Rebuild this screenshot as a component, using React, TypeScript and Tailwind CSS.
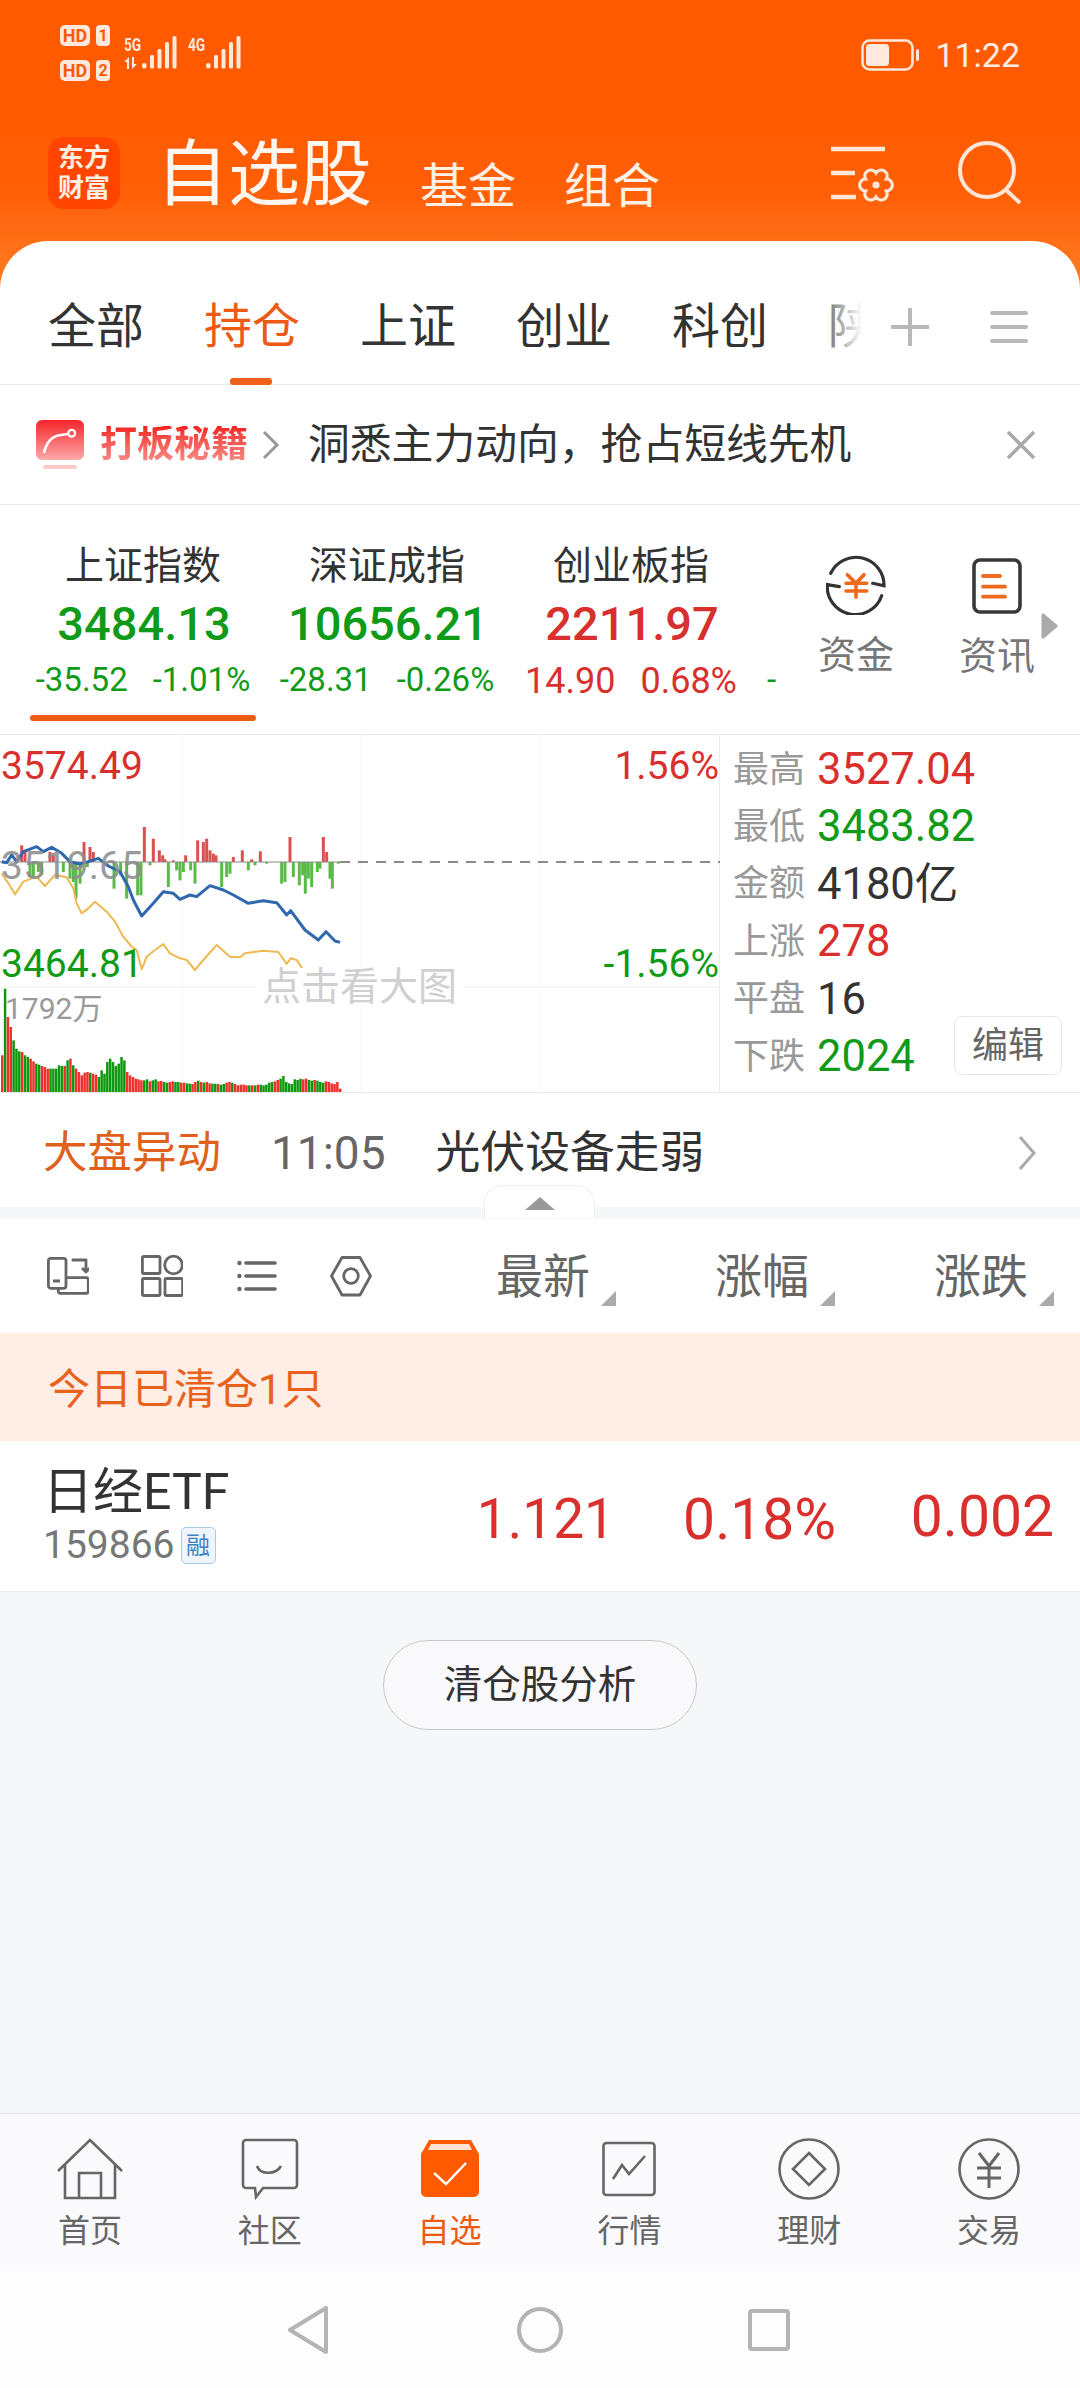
const RED = "text-[#d9302e]";
const GREEN = "text-[#0f9a17]";

// chart data traced from the picture, in 3x coordinates
const blueLine: number[][] = [[5,365],[20,368],[35,345],[50,365],[70,335],[110,320],[130,335],[155,322],[185,340],[210,365],[240,372],[265,365],[295,355],[325,378],[360,395],[385,440],[400,480],[425,528],[460,490],[490,455],[520,460],[540,478],[570,465],[590,470],[630,437],[670,450],[700,465],[745,490],[790,482],[830,488],[860,525],[872,512],[915,570],[955,600],[978,575],[1005,603],[1020,607]];
const yellowLine: number[][] = [[5,400],[25,430],[45,463],[70,425],[110,410],[135,438],[165,405],[200,412],[220,445],[230,490],[245,520],[265,505],[285,485],[320,515],[345,545],[370,590],[395,620],[410,630],[425,688],[440,650],[465,630],[490,612],[510,640],[540,655],[560,660],[585,690],[610,660],[650,615],[690,650],[720,652],[735,640],[790,632],[835,636],[860,672],[872,655],[890,660],[930,722],[960,735],[980,708],[1005,735],[1020,740]];
const macdUp: number[][] = [[65,50],[75,30],[150,30],[160,20],[252,60],[270,45],[280,30],[433,105],[460,70],[478,35],[488,20],[495,8],[520,5],[557,20],[593,65],[610,60],[620,70],[630,35],[640,25],[648,20],[700,15],[727,35],[755,8],[781,32],[870,75],[970,75],[980,30]];
const macdDown: number[][] = [[90,45],[100,50],[115,30],[125,40],[190,30],[210,50],[220,60],[228,110],[240,65],[262,15],[342,80],[362,40],[380,110],[413,100],[423,100],[450,10],[505,75],[530,25],[540,55],[550,30],[572,25],[585,65],[665,75],[680,45],[690,35],[745,25],[765,10],[800,5],[845,65],[855,60],[880,45],[898,70],[908,40],[916,95],[925,50],[935,75],[952,30],[960,20],[990,50],[997,80],[1015,5]];
const volH = [110,310,225,195,155,130,122,120,110,105,100,92,85,82,78,75,70,70,70,70,80,78,78,95,100,80,70,60,50,58,60,58,55,52,45,65,55,90,100,90,78,85,105,95,60,50,45,40,38,35,35,38,32,35,38,32,33,30,28,30,32,30,30,28,28,26,25,24,30,34,30,28,30,26,25,25,24,22,24,28,30,28,24,20,22,22,20,20,20,20,22,22,20,22,28,30,32,36,40,48,30,26,24,38,36,40,38,40,36,34,36,34,30,28,32,30,26,24,30,10];
const volC = "rgrrgggrggrrggrrrgggggrgrgrrrrrgrrggggggggggrrrrrrggrggrrggrrggrrggrrgrgrrggrggrrgrrrrrgrgrgggggrrggggggggrrggrgggr";

const toPts = (pts: number[][]) => pts.map(([x, y]) => `${x / 3},${y / 3 + 5}`).join(" ");

const Chart = () => (
  <svg width="720" height="357" viewBox="0 0 720 357" className="block">
    <g stroke="#ededed" strokeWidth="1">
      <line x1="0" x2="720" y1="252" y2="252" />
      <line x1="182" x2="182" y1="0" y2="357" strokeDasharray="2 2" />
      <line x1="361" x2="361" y1="0" y2="357" strokeDasharray="2 2" />
      <line x1="541" x2="541" y1="0" y2="357" strokeDasharray="2 2" />
    </g>
    <line x1="340" x2="720" y1="127" y2="127" stroke="#8a8a8a" strokeWidth="2" strokeDasharray="10 8" />
    {macdUp.map(([x, h]) => (
      <rect key={`u${x}`} x={x / 3 - 1.5} y={127 - h / 3} width="3" height={h / 3} fill="#dd5050" />
    ))}
    {macdDown.map(([x, h]) => (
      <rect key={`d${x}`} x={x / 3 - 1.5} y={127} width="3" height={h / 3} fill="#5cba48" />
    ))}
    <line x1="0" x2="350" y1="127" y2="127" stroke="#8a8a8a" strokeWidth="1" />
    <polyline points={toPts(yellowLine)} fill="none" stroke="#efb951" strokeWidth="2" strokeLinejoin="round" />
    <polyline points={toPts(blueLine)} fill="none" stroke="#2f68ae" strokeWidth="3" strokeLinejoin="round" />
    {volH.map((h, i) => (
      <rect
        key={i}
        x={1 + i * 2.84}
        y={357 - h / 3}
        width="2.5"
        height={h / 3}
        fill={volC[i] === "g" ? "#0d980f" : "#f0302c"}
      />
    ))}
  </svg>
);

const Signal = () => (
  <svg width="36" height="33" viewBox="0 0 36 33" fill="#ffe9dc" className="mt-[11px]">
    <rect x="0" y="27" width="4.5" height="5.5" rx="2" />
    <rect x="8" y="19" width="4" height="13.5" rx="1.5" />
    <rect x="15.5" y="13" width="4" height="19.5" rx="1.5" />
    <rect x="23" y="6" width="4" height="26.5" rx="1.5" />
    <rect x="30.5" y="0" width="4" height="32.5" rx="1.5" />
  </svg>
);

const NetLabel = ({ text }: { text: string }) => (
  <span className="block w-[18px] origin-left scale-x-[0.72] whitespace-nowrap text-[19px] font-bold leading-none">{text}</span>
);

const StatusBar = () => (
  <div className="flex h-[100px] items-start justify-between px-[60px] pt-[25px] text-[#ffe9dc]">
    <div className="flex">
      <div className="flex flex-col gap-[14px]">
        {["1", "2"].map((n) => (
          <div key={n} className="flex gap-[6px]">
            <span className="flex h-[21px] w-[30px] items-center justify-center rounded-[5px] bg-[#ffe9dc] text-[18px] font-bold leading-none text-[#ff5a00]">
              HD
            </span>
            <span className="flex h-[21px] w-[14px] items-center justify-center rounded-[4px] bg-[#ffe9dc] text-[16px] font-bold leading-none text-[#ff5a00]">
              {n}
            </span>
          </div>
        ))}
      </div>
      <div className="ml-[14px] mt-[10px] w-[18px]">
        <NetLabel text="5G" />
        <svg width="17" height="12" viewBox="0 0 17 12" fill="#ffe9dc" className="mt-[3px]">
          <path d="M0 5L5 0V12H3V5ZM8 0H10V7H13L8 12Z" />
        </svg>
      </div>
      <Signal />
      <div className="ml-[10px] mt-[10px]">
        <NetLabel text="4G" />
      </div>
      <Signal />
    </div>
    <div className="flex items-center gap-[14px] pt-[13px]">
      <svg width="60" height="32" viewBox="0 0 60 32" fill="none">
        <rect x="1.5" y="1.5" width="50" height="29" rx="7" stroke="#ffe9dc" strokeWidth="2.5" />
        <rect x="5" y="5" width="23" height="22" rx="3.5" fill="#ffe9dc" />
        <rect x="55" y="10" width="3" height="12" rx="1.5" fill="#ffe9dc" />
      </svg>
      <span className="text-[34px] leading-none text-[#ffeee4]">11:22</span>
    </div>
  </div>
);

const Header = () => (
  <div className="flex h-[190px] items-start bg-gradient-to-b from-[#ff5a00] via-[#ff5f06] to-[#ff7d22]">
    <div className="ml-[48px] mt-[37px] flex h-[72px] w-[72px] flex-col items-center justify-center rounded-[16px] bg-[#ff4500] text-[26px] font-bold leading-[30px] text-[#ffeee2]">
      <span>东方</span>
      <span>财富</span>
    </div>
    <span className="ml-[36px] mt-[39px] text-[72px] leading-none text-[#fff6ef]">自选股</span>
    <span className="ml-[48px] mt-[63px] text-[48px] leading-none text-[#fff1e6]">基金</span>
    <span className="ml-[48px] mt-[63px] text-[48px] leading-none text-[#fff1e6]">组合</span>
    <svg width="70" height="66" viewBox="0 0 70 66" fill="none" stroke="#ffe6d6" strokeWidth="4.5" className="ml-[169px] mt-[43px]">
      <path d="M2 6H56M2 30H26M2 54H27" />
      <g transform="translate(47 42)" strokeWidth="3.2">
        <path d="M0 -12A6 6 0 0 1 10.4 -6A6 6 0 0 1 10.4 6A6 6 0 0 1 0 12A6 6 0 0 1 -10.4 6A6 6 0 0 1 -10.4 -6A6 6 0 0 1 0 -12Z" />
        <circle r="3.6" fill="#ffe6d6" stroke="none" />
      </g>
    </svg>
    <svg width="66" height="66" viewBox="0 0 66 66" fill="none" stroke="#ffe6d6" strokeWidth="4" className="ml-[58px] mt-[40px]">
      <circle cx="30" cy="30" r="27" />
      <path d="M48 49L63 63" />
    </svg>
  </div>
);

const Tabs = () => (
  <div className="relative flex h-[144px] items-center border-b border-[#e8e8e8] pl-[48px] pt-[28px] text-[48px] leading-none text-[#333]">
    <div className="flex gap-[60px]">
      <span>全部</span>
      <span className="relative text-[#ec5a14]">
        持仓
        <span className="absolute -bottom-[34px] left-[26px] h-[7px] w-[42px] rounded-[3px] bg-[#f0601a]" />
      </span>
      <span>上证</span>
      <span>创业</span>
      <span>科创</span>
    </div>
    <span className="relative ml-[60px] h-[48px] w-[34px] overflow-hidden text-[#777]">
      陕
      <span className="absolute inset-0 bg-gradient-to-r from-white/0 to-white" />
    </span>
    <svg width="40" height="40" viewBox="0 0 40 40" stroke="#b8b8b8" strokeWidth="4" className="ml-[28px]">
      <path d="M20 1V39M1 20H39" />
    </svg>
    <svg width="38" height="34" viewBox="0 0 38 34" stroke="#b8b8b8" strokeWidth="4" strokeLinecap="round" className="ml-[60px]">
      <path d="M2 3H36M2 17H36M2 31H36" />
    </svg>
  </div>
);

const Banner = () => (
  <div className="flex h-[120px] items-center border-b border-[#e8e8e8] pl-[36px]">
    <svg width="50" height="50" viewBox="0 0 50 50" className="shrink-0">
      <defs>
        <linearGradient id="bn" x1="0" x2="0" y1="0" y2="1">
          <stop offset="0" stopColor="#f5242a" />
          <stop offset="1" stopColor="#fda9a9" />
        </linearGradient>
      </defs>
      <rect x="0" y="0" width="48" height="40" rx="6" fill="url(#bn)" />
      <rect x="7" y="45" width="34" height="4" rx="2" fill="#fbc9c7" />
      <path d="M8 33C10 24 14 16 25 15L32 14" fill="none" stroke="#fff" strokeWidth="2.6" />
      <circle cx="35.7" cy="13.3" r="3.4" fill="none" stroke="#fff" strokeWidth="2.2" />
    </svg>
    <span className="ml-[14px] bg-gradient-to-b from-[#f21c20] to-[#f98a88] bg-clip-text text-[37px] font-bold leading-none text-transparent">
      打板秘籍
    </span>
    <svg width="18" height="30" viewBox="0 0 18 30" fill="none" stroke="#999" strokeWidth="3" className="ml-[14px]">
      <path d="M2 2L15 15L2 28" />
    </svg>
    <span className="ml-[28px] text-[41.8px] leading-none text-[#333]">洞悉主力动向，抢占短线先机</span>
    <svg width="30" height="30" viewBox="0 0 30 30" stroke="#aaa" strokeWidth="3.5" className="ml-[155px]">
      <path d="M2 2L28 28M28 2L2 28" />
    </svg>
  </div>
);

const Index = ({ name, value, a, b, up, active }: { name: string; value: string; a: string; b: string; up?: boolean; active?: boolean }) => (
  <div className="relative flex w-[244px] flex-col items-center pt-[42px]">
    <span className="-ml-[2px] text-[39px] leading-none text-[#333]">{name}</span>
    <span className={`mt-[14px] text-[47px] font-medium leading-none ${up ? RED : GREEN}`}>{value}</span>
    <div className={`-ml-[2px] mt-[16px] flex gap-[25px] leading-none ${up ? `text-[36px] ${RED}` : `text-[33px] ${GREEN}`}`}>
      <span>{a}</span>
      <span>{b}</span>
    </div>
    {active && <span className="absolute bottom-[13px] left-[8px] h-[6px] w-[226px] rounded-[3px] bg-[#ec5a14]" />}
  </div>
);

const Indices = () => (
  <div className="relative flex h-[230px] border-b border-[#e8e8e8] pl-[22px]">
    <Index name="上证指数" value="3484.13" a="-35.52" b="-1.01%" active />
    <Index name="深证成指" value="10656.21" a="-28.31" b="-0.26%" />
    <Index name="创业板指" value="2211.97" a="14.90" b="0.68%" up />
    <span className={`ml-[13px] mt-[158px] w-[23px] text-[33px] leading-none ${GREEN}`}>-</span>
    <div className="flex w-[132px] flex-col items-center pt-[50px]">
      <svg width="60" height="60" viewBox="0 0 60 60" fill="none" strokeLinecap="round">
        <path d="M4.7 18.3A28 28 0 0 1 58 30.7L46.7 28.3M13.3 31.7L1.3 29.7A28 28 0 0 0 55.7 40.7" stroke="#333" strokeWidth="3.2" />
        <path d="M21.3 19.7L30 28.3L38 19.7M20 28.3H40.7M20 36H40.7M30 28.3V42.3" stroke="#ee6a1c" strokeWidth="3.6" />
      </svg>
      <span className="mt-[21px] text-[38px] leading-none text-[#777]">资金</span>
    </div>
    <div className="ml-[9px] flex w-[132px] flex-col items-center pt-[53px]">
      <svg width="50" height="56" viewBox="0 0 50 56" fill="none">
        <rect x="2" y="2" width="46" height="52" rx="6" stroke="#383838" strokeWidth="3.6" />
        <path d="M11 18H28M11 28.7H33M11 38.7H33" stroke="#ee6a1c" strokeWidth="3.8" strokeLinecap="round" />
      </svg>
      <span className="mt-[23px] text-[38px] leading-none text-[#777]">资讯</span>
    </div>
    <svg width="18" height="26" viewBox="0 0 18 26" fill="#aaa" stroke="#aaa" strokeWidth="3" strokeLinejoin="round" className="absolute left-[1041px] top-[108px]">
      <path d="M2 2L15 13L2 24Z" />
    </svg>
  </div>
);

const Stat = ({ label, value, color, children }: { label: string; value: string; color: string; children?: React.ReactNode }) => (
  <div className="flex h-[57.4px] items-center pl-[13px]">
    <span className="w-[73px] text-[36px] leading-none text-[#999]">{label}</span>
    <span className={`ml-[11px] text-[43.5px] leading-none ${color}`}>{value}</span>
    {children}
  </div>
);

const ChartSection = () => (
  <div className="flex h-[358px] border-b border-[#e8e8e8]">
    <div className="relative h-[357px] w-[720px] border-r border-[#ededed]">
      <Chart />
      <span className={`absolute left-[1px] top-[12px] text-[39px] leading-none ${RED}`}>3574.49</span>
      <span className={`absolute right-0 top-[12px] text-[39px] leading-none ${RED}`}>1.56%</span>
      <span className="absolute left-[1px] top-[112px] text-[39px] leading-none text-[#8d8d8d]/90">3519.65</span>
      <span className={`absolute left-[1px] top-[210px] text-[39px] leading-none ${GREEN}`}>3464.81</span>
      <span className={`absolute right-0 top-[210px] text-[39px] leading-none ${GREEN}`}>-1.56%</span>
      <span className="absolute left-[5px] top-[259px] text-[30px] leading-none text-[#999]">1792万</span>
      <span className="absolute left-[256px] top-[233px] bg-white px-[6px] text-[39px] leading-none text-[#d0d0d0]">点击看大图</span>
    </div>
    <div className="flex-1 pt-[6px]">
      <Stat label="最高" value="3527.04" color={RED} />
      <Stat label="最低" value="3483.82" color={GREEN} />
      <Stat label="金额" value="4180亿" color="text-[#333]" />
      <Stat label="上涨" value="278" color={RED} />
      <Stat label="平盘" value="16" color="text-[#333]" />
      <Stat label="下跌" value="2024" color={GREEN}>
        <span className="-mt-[22px] ml-auto mr-[18px] flex h-[59px] w-[108px] items-center justify-center rounded-[8px] border border-[#e6e6e6] text-[36px] leading-none text-[#666]">
          编辑
        </span>
      </Stat>
    </div>
  </div>
);

const Alert = () => (
  <div className="relative flex h-[114px] items-center pl-[43px] pt-[6px] leading-none">
    <span className="text-[44.5px] text-[#e0611c]">大盘异动</span>
    <span className="ml-[50px] text-[46px] text-[#666]">11:05</span>
    <span className="ml-[50px] text-[44.8px] text-[#333]">光伏设备走弱</span>
    <svg width="20" height="36" viewBox="0 0 20 36" fill="none" stroke="#aaa" strokeWidth="3" className="ml-auto mr-[43px]">
      <path d="M3 2L17 18L3 34" />
    </svg>
  </div>
);

const Strip = () => (
  <div className="relative h-[12px] bg-[#f6f7f9]">
    <div className="absolute -top-[22px] left-[484px] flex h-[33px] w-[111px] items-start justify-center rounded-t-[18px] border-x border-t border-[#f0f0f0] bg-white pt-[11px]">
      <svg width="30" height="13" viewBox="0 0 30 13" fill="#999">
        <path d="M15 0L30 13H0Z" />
      </svg>
    </div>
  </div>
);

const SortHead = ({ label, w }: { label: string; w: string }) => (
  <div className={`relative flex justify-end ${w}`}>
    <span className="whitespace-nowrap text-[47px] leading-none text-[#666]">{label}</span>
    <svg width="15" height="15" viewBox="0 0 15 15" fill="#aaa" className="mb-[-6px] ml-[11px] shrink-0 self-end">
      <path d="M15 0V15H0Z" />
    </svg>
  </div>
);

const TableHead = () => (
  <div className="flex h-[114px] items-center pl-[47px]">
    <svg width="42" height="44" viewBox="0 0 42 44" fill="none" stroke="#666" strokeWidth="2.8" strokeLinejoin="round">
      <rect x="1.4" y="4.3" width="17.6" height="30" rx="2.5" />
      <path d="M19 23.7H39A2.3 2.3 0 0 1 41.3 26V37A2.3 2.3 0 0 1 39 39.3H13.6A2.3 2.3 0 0 1 11.3 37V34.3" />
      <path d="M6 27H13M24.7 6H39V17.7M35 14L39 18L43 14" />
    </svg>
    <svg width="42" height="44" viewBox="0 0 42 44" fill="none" stroke="#666" strokeWidth="2.8" className="ml-[52px]">
      <rect x="1.4" y="2.5" width="17.6" height="17" rx="1.5" />
      <circle cx="32.5" cy="11" r="8.8" />
      <rect x="1.4" y="24.5" width="17.6" height="17" rx="1.5" />
      <rect x="24" y="24.5" width="17.6" height="17" rx="1.5" />
    </svg>
    <svg width="40" height="34" viewBox="0 0 40 34" className="ml-[54px]">
      <path d="M9 4H38M9 17H38M9 30H38" stroke="#666" strokeWidth="3.6" strokeLinecap="round" />
      <circle cx="2.4" cy="4" r="2.2" fill="#666" />
      <circle cx="2.4" cy="17" r="2.2" fill="#666" />
      <circle cx="2.4" cy="30" r="2.2" fill="#666" />
    </svg>
    <svg width="42" height="44" viewBox="0 0 42 44" fill="none" stroke="#666" strokeWidth="2.8" className="ml-[53px]">
      <path d="M12 3.5H30L40.5 22L30 41H12L1.5 22Z" strokeLinejoin="round" />
      <circle cx="21" cy="22" r="7.3" />
    </svg>
    <div className="ml-auto flex pr-[26px]">
      <SortHead label="最新" w="w-[130px]" />
      <SortHead label="涨幅" w="w-[219px]" />
      <SortHead label="涨跌" w="w-[219px]" />
    </div>
  </div>
);

const Row = () => (
  <div className="flex h-[151px] items-center border-b border-[#ececec] bg-white">
    <div className="flex w-[400px] flex-col pl-[43px]">
      <span className="text-[50px] leading-none text-[#333]">日经ETF</span>
      <div className="mt-[9px] flex items-center">
        <span className="text-[39px] leading-none text-[#777]">159866</span>
        <span className="ml-[6px] flex h-[37px] w-[35px] items-center justify-center rounded-[5px] border border-[#a9c9e8] bg-[#eef5fc] text-[24px] leading-none text-[#3f83c7]">
          融
        </span>
      </div>
    </div>
    <div className={`flex flex-1 pr-[26px] leading-none ${RED}`}>
      <span className="w-[215px] pt-[7px] text-right text-[55px]">1.121</span>
      <span className="w-[221px] pt-[6px] text-right text-[57px]">0.18%</span>
      <span className="w-[218px] pt-[3px] text-right text-[57px]">0.002</span>
    </div>
  </div>
);

const NavItem = ({ label, active, children }: { label: string; active?: boolean; children: React.ReactNode }) => (
  <div className="flex flex-col items-center pt-[22px]">
    <div className="flex h-[66px] items-center justify-center">{children}</div>
    <span className={`mt-[13px] text-[32px] leading-none ${active ? "text-[#ec5a14]" : "text-[#666]"}`}>{label}</span>
  </div>
);

const BottomNav = () => (
  <div className="grid h-[157px] grid-cols-6 border-t border-[#e6e6e8] bg-[#fafafc] pr-[1px]">
    <NavItem label="首页">
      <svg width="66" height="62" viewBox="0 0 66 62" fill="none" stroke="#666" strokeWidth="2.6">
        <path d="M1 33L33 2L65 33M8 27V60H58V27M22 60V35H44V60" />
      </svg>
    </NavItem>
    <NavItem label="社区">
      <svg width="58" height="62" viewBox="0 0 58 62" fill="none" stroke="#666" strokeWidth="2.6">
        <path d="M5 2H53A3 3 0 0 1 56 5V47A3 3 0 0 1 53 50H22L15 59L14 50H5A3 3 0 0 1 2 47V5A3 3 0 0 1 5 2Z" />
        <path d="M16 28C19 37 35 37 40 28" />
      </svg>
    </NavItem>
    <NavItem label="自选" active>
      <svg width="58" height="58" viewBox="0 0 58 58">
        <path d="M8 0H50L58 14V52A5 5 0 0 1 53 57H5A5 5 0 0 1 0 52V14Z" fill="#ff5a00" />
        <path d="M10 4H48L51 10H7Z" fill="#ffe3d2" />
        <path d="M13 33L25 44L45 23" fill="none" stroke="#fff" strokeWidth="2.4" />
      </svg>
    </NavItem>
    <NavItem label="行情">
      <svg width="54" height="56" viewBox="0 0 54 56" fill="none" stroke="#666" strokeWidth="2.6">
        <rect x="1.5" y="2" width="51" height="52" rx="3" />
        <path d="M11 38L20 24L27 33L43 15" />
      </svg>
    </NavItem>
    <NavItem label="理财">
      <svg width="62" height="64" viewBox="0 0 62 64" fill="none" stroke="#666" strokeWidth="2.6">
        <circle cx="31" cy="32" r="29.5" />
        <path d="M31 16L47 32L31 48L15 32Z" />
      </svg>
    </NavItem>
    <NavItem label="交易">
      <svg width="62" height="64" viewBox="0 0 62 64" fill="none" stroke="#666" strokeWidth="2.6">
        <circle cx="31" cy="32" r="29.5" />
        <path d="M21 16L31 29L41 16M19 31H43M19 41H43M31 29V51" strokeWidth="3" />
      </svg>
    </NavItem>
  </div>
);

const SystemNav = () => (
  <div className="flex h-[118px] items-start bg-[#fdfdfd] pl-[287px] pt-[36px]">
    <svg width="42" height="48" viewBox="0 0 42 48" fill="none" stroke="#b4b4b4" strokeWidth="4" strokeLinejoin="round">
      <path d="M39 2V46L3 24Z" />
    </svg>
    <svg width="46" height="48" viewBox="0 0 46 48" fill="none" stroke="#b4b4b4" strokeWidth="4" className="ml-[188px]">
      <circle cx="23" cy="24" r="21" />
    </svg>
    <svg width="42" height="42" viewBox="0 0 42 42" fill="none" stroke="#b4b4b4" strokeWidth="4" className="ml-[185px] mt-[3px]">
      <rect x="2" y="2" width="38" height="38" rx="2" />
    </svg>
  </div>
);

export default function App() {
  return (
    <div className="flex h-[2388px] w-[1080px] flex-col overflow-hidden bg-[#f6f7f9] font-[Roboto,'Noto_Sans_CJK_SC',sans-serif]">
      <div className="bg-[#ff5a00]">
        <StatusBar />
      </div>
      <Header />
      <div className="-mt-[49px] rounded-t-[48px] bg-white">
        <Tabs />
        <Banner />
        <Indices />
        <ChartSection />
        <Alert />
      </div>
      <Strip />
      <div className="bg-white">
        <TableHead />
      </div>
      <div className="flex h-[108px] items-center bg-[#ffeee6] pl-[48px] pt-[5px] text-[42px] leading-none text-[#e8621c]">
        今日已清仓1只
      </div>
      <Row />
      <div className="flex flex-1 justify-center pt-[48px]">
        <span className="flex h-[90px] w-[314px] items-center justify-center rounded-full border border-[#c9c9c9] bg-white/30 text-[38.5px] leading-none text-[#333]">
          清仓股分析
        </span>
      </div>
      <BottomNav />
      <SystemNav />
    </div>
  );
}
